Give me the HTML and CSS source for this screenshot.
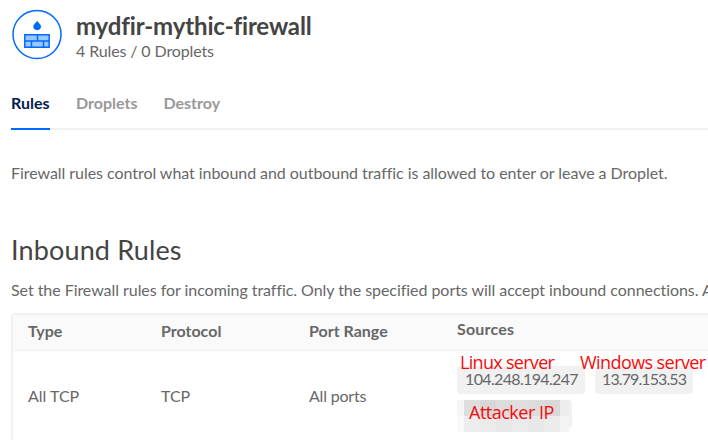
FILE: index.html
```
<!DOCTYPE html>
<html lang="en">
<head>
<meta charset="utf-8">
<title>mydfir-mythic-firewall</title>
<link rel="stylesheet" href="styles.css">
</head>
<body>
<header class="header">
  <svg class="logo" viewBox="0 0 52 52">
    <circle cx="26" cy="25.5" r="24" fill="#fff" stroke="#0069ff" stroke-width="1.5"/>
    <path d="M26.2 11.8C27.3 14.1 30 15.1 30 17.6C30 19.8 28.4 21.2 26.2 21.2S22.3 19.8 22.3 17.6C22.3 15.1 25 14.1 26.2 11.8Z" fill="#0069ff"/>
    <path d="M13.8 25.8H38.2V38.2H13.8Z" fill="#99c7ff"/>
    <path d="M13.8 25.8H38.2V38.2H13.8ZM13.8 32H38.2M26.5 26V32M20.5 32V38M32.5 32V38" fill="none" stroke="#0069ff" stroke-width="1.5"/>
  </svg>
  <div>
    <h1 class="title">mydfir-mythic-firewall</h1>
    <p class="subtitle">4 Rules / 0 Droplets</p>
  </div>
</header>
<nav class="tabs">
  <a class="tab active">Rules</a>
  <a class="tab">Droplets</a>
  <a class="tab">Destroy</a>
</nav>
<p class="intro">Firewall rules control what inbound and outbound traffic is allowed to enter or leave a Droplet.</p>
<h2 class="heading">Inbound Rules</h2>
<p class="description">Set the Firewall rules for incoming traffic. Only the specified ports will accept inbound connections. A</p>
<section class="table">
  <div class="row head">
    <div>Type</div><div>Protocol</div><div>Port Range</div><div class="th-sources">Sources</div>
  </div>
  <div class="row rule">
    <div>All TCP</div><div>TCP</div><div class="ports">All ports</div>
    <div class="sources">
      <div class="tag tag-linux">104.248.194.247<b class="note note-linux">Linux server</b></div>
      <div class="tag tag-windows">13.79.153.53<b class="note note-windows">Windows server</b></div>
      <div class="tag tag-attacker">
        <svg class="mosaic" viewBox="0 0 112 32" shape-rendering="crispEdges">
          <path d="M0 0H7V16H0Z" fill="#f5f5f5"/><path d="M0 16H7V32H0Z" fill="#fafafa"/>
          <path d="M7 0H23V16H7Z" fill="#dedede"/><path d="M23 0H39V16H23Z" fill="#d7d7d7"/>
          <path d="M39 0H55V16H39Z" fill="#dcdcdc"/><path d="M55 0H71V16H55Z" fill="#dfdfdf"/>
          <path d="M71 0H87V16H71Z" fill="#dcdcdc"/><path d="M87 0H103V16H87Z" fill="#d9d9d9"/>
          <path d="M103 0H112V16H103Z" fill="#eceeee"/>
          <path d="M7 16H23V32H7Z" fill="#ededed"/><path d="M23 16H39V32H23Z" fill="#ebebeb"/>
          <path d="M39 16H55V32H39Z" fill="#e8e8e8"/><path d="M55 16H71V32H55Z" fill="#eaecec"/>
          <path d="M71 16H87V32H71Z" fill="#e8e8e8"/><path d="M87 16H103V32H87Z" fill="#ececec"/>
          <path d="M103 16H112V32H103Z" fill="#f4f4f4"/>
        </svg>
        <b class="note note-attacker">Attacker IP</b>
      </div>
    </div>
  </div>
</section>
</body>
</html>
```
FILE: styles.css
```
* { box-sizing: border-box; }
html, body { margin: 0; overflow: hidden; }
body { width: 708px; height: 440px; background: #fff; color: #676767; font: 16px/20px Lato, "Liberation Sans", sans-serif; font-variant-ligatures: none; white-space: nowrap; }
h1, h2, p { margin: 0; }
.header { display: flex; gap: 13px; height: 85px; padding: 9px 0 0 11px; }
.logo { width: 52px; height: 52px; }
.title { height: 33px; font-size: 24px; line-height: 34px; font-weight: 700; letter-spacing: -0.14px; color: #444; }
.subtitle { line-height: 18px; letter-spacing: -0.12px; }
.tabs { display: flex; gap: 26px; height: 45px; margin-left: 11px; border-bottom: 2px solid #f1f1f1; }
.tab { height: 45px; padding-top: 8px; font-weight: 700; color: #999; }
.tab.active { color: #031b4e; border-bottom: 2px solid #0069ff; width: 39px; }
.intro { padding: 33px 0 0 11px; height: 104px; letter-spacing: -0.05px; }
.heading { padding-left: 11px; height: 32px; font-size: 27px; line-height: 32px; font-weight: 400; letter-spacing: 0.15px; color: #444; }
.description { height: 47px; padding: 14px 0 0 11px; letter-spacing: -0.05px; }
.table { height: 140px; margin-left: 11px; border: 2px solid #f1f1f1; border-right: 0; border-bottom: 0; border-radius: 4px 0 0 0; }
.row { display: grid; grid-template-columns: 133px 148px 148px 1fr; padding-left: 15px; }
.head { height: 36px; background: #fafafa; border-bottom: 1px solid #f1f1f1; font-weight: 700; line-height: 32px; }
.th-sources { line-height: 28px; letter-spacing: 0.2px; }
.rule { line-height: 90px; }
.ports { letter-spacing: -0.2px; }
.sources { display: flex; flex-wrap: wrap; align-content: flex-start; gap: 6px 10px; padding-top: 15px; line-height: 26px; }
.tag { position: relative; height: 28px; padding-left: 8px; border-radius: 4px; background: #f1f1f1; }
.tag-linux { width: 128px; letter-spacing: -0.65px; }
.tag-windows { width: 98px; padding-left: 7px; letter-spacing: -0.9px; }
.tag-attacker { width: 115px; }
.mosaic { position: absolute; left: 0; top: 0; width: 112px; height: 32px; }
.note { position: absolute; color: #f50b0b; font: 400 18px/22px "Open Sans", "Noto Sans", sans-serif; }
.note-linux { left: 3px; top: -15px; letter-spacing: -0.7px; }
.note-windows { left: -15px; top: -15px; letter-spacing: -0.58px; }
.note-attacker { left: 12px; top: 1px; letter-spacing: -0.5px; }
```
